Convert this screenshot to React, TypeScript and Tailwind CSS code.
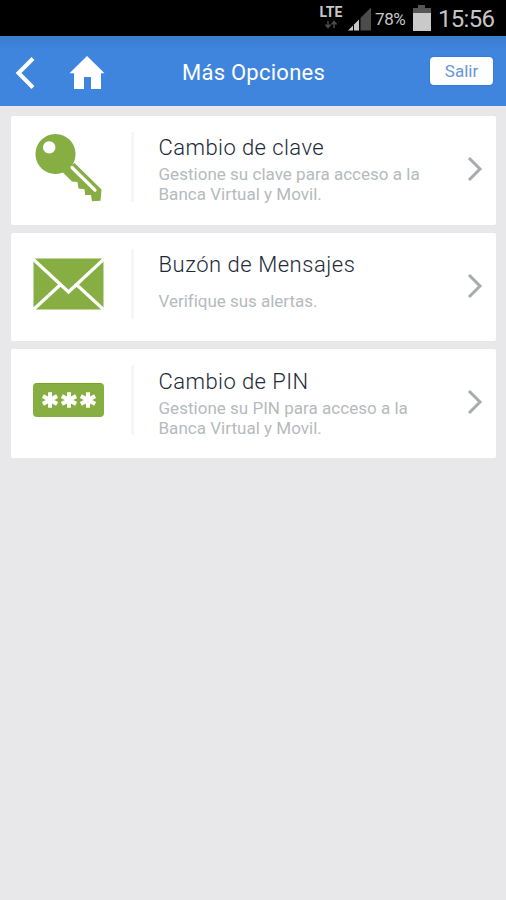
import React from "react";

function KeyIcon() {
  return (
    <svg width="71" height="72" viewBox="0 0 71 72" fill="#86ae43">
      <path
        fillRule="evenodd"
        d="M22.500 3a20 20 0 1 0 .01 0ZM16.200 10.200a6.200 6.200 0 1 1-.01 0Z"
      />
      <path d="M41.500 32 68.500 58.500 67.500 69.700 59 70.200 58 64H52.200L51.500 58.300 45.500 57.500 44.500 51 39 50.500 29.500 41Z" />
      <path d="m39 36.500 23 22.700" stroke="#fff" strokeWidth="3.300" strokeLinecap="round" />
    </svg>
  );
}

function EnvelopeIcon() {
  return (
    <svg width="71" height="52" viewBox="0 0 71 52" fill="none">
      <rect x=".5" y=".5" width="70" height="51" fill="#86ae43" />
      <path d="M0 1 35.500 34 71 1M.5 51.500 27 27M70.500 51.500 44 27" stroke="#fff" strokeWidth="3.300" />
    </svg>
  );
}

function Asterisk() {
  return (
    <svg width="16" height="16" viewBox="0 0 16 16" fill="none" stroke="#fff" strokeWidth="4">
      <path d="M8 .3v15.400M.9 4.100l14.200 7.800M15.100 4.100.9 11.900" />
    </svg>
  );
}

function PinIcon() {
  return (
    <div className="flex h-[34px] w-[71px] items-center justify-center gap-[3px] rounded-[4px] border-t border-[#79a51f] bg-[#86ae43] pb-[2px]">
      <Asterisk />
      <Asterisk />
      <Asterisk />
    </div>
  );
}

interface OptionProps {
  icon: React.ReactNode;
  title: string;
  titleClass: string;
  children: React.ReactNode;
}

function Option({ icon, title, titleClass, children }: OptionProps) {
  return (
    <a className="flex h-[108.500px] items-start rounded-[2px] bg-white">
      <div className="flex h-[102px] w-[115px] shrink-0 items-center justify-center">{icon}</div>
      <div className="ml-[5px] mt-4 h-[70px] w-[3px] bg-[#f6f6f7]" />
      <div className="ml-[24.500px] flex-1 whitespace-nowrap pt-[19px]">
        <h2 className={`text-[22px] font-light leading-[26px] text-[#1d2a37] ${titleClass}`}>{title}</h2>
        {children}
      </div>
      <svg className="mr-[13px] mt-10" width="16" height="26" viewBox="0 0 16 26" fill="none">
        <path d="m2 2 11 11L2 24" stroke="#a7abad" strokeWidth="3" />
      </svg>
    </a>
  );
}

export default function App() {
  return (
    <div className="flex h-[900px] w-[506px] flex-col overflow-hidden bg-[#e8e8eb] font-['Roboto',sans-serif]">
      <div className="flex h-9 shrink-0 bg-black text-[#c6c6c6]">
        <div className="ml-[319px] flex w-6 flex-col items-center pt-[5px]">
          <span className="text-[14px] font-bold leading-[15px] tracking-[0.100px]">LTE</span>
          <svg width="14" height="9" viewBox="0 0 14 9" fill="none" stroke="#4b4b4b" strokeWidth="1.500">
            <path d="M4 1v6M1.500 4.500 4 7.500l2.500-3M10 8V2M7.500 4.500 10 1.500l2.500 3" />
          </svg>
        </div>
        <svg className="ml-[5px] mt-[7px]" width="24" height="24" viewBox="0 0 24 24">
          <path d="M0 23.500 11 12.500v11Z" fill="#c8c8c8" />
          <path d="M5.500 18v6" stroke="#000" />
          <path d="M12.500 11 23 .5v23H12.500Z" fill="#4c4c4c" />
        </svg>
        <span className="ml-[3px] mt-[9px] w-8 text-[17px] leading-5 tracking-[-0.400px]">78%</span>
        <svg className="ml-[5px] mt-[4px]" width="20" height="27" viewBox="0 0 20 27">
          <path d="M6 1h7v3h6v5H1V4h5Z" fill="#555" />
          <path d="M1 9h18v18H1Z" fill="#c9c9c9" />
        </svg>
        <span className="ml-[6px] mt-[5px] text-[24px] leading-7 tracking-[-0.700px]">15:56</span>
      </div>

      <header className="flex h-[70px] shrink-0 items-center bg-linear-to-b from-[#3b7cce] to-[#3f85de] to-20% text-white">
        <svg className="ml-[14px] mt-[3px]" width="21" height="34" viewBox="0 0 21 34" fill="none">
          <path d="M19 2.500 4.500 17 19 31.500" stroke="#fff" strokeWidth="4" />
        </svg>
        <svg className="ml-[34px] mt-[3px]" width="36" height="36" viewBox="0 0 36 36" fill="#fff">
          <path d="M18 1 35.500 18.300H32V34H22V22h-7v12H5V18.300H.5Z" />
        </svg>
        <h1 className="ml-[77px] mt-[4px] w-[248px] text-[22px] leading-7 tracking-[0.250px]">Más Opciones</h1>
        <button className="flex h-[28px] w-[63px] items-center justify-center rounded-[4px] bg-white pt-[2px] text-[17px] text-[#6994d9] shadow-[0_0_2px_#2469c9]">
          Salir
        </button>
      </header>

      <main className="flex flex-col gap-[8px] pl-[11px] pr-[10px] pt-[10px]">
        <Option icon={<KeyIcon />} title="Cambio de clave" titleClass="tracking-[0.430px]">
          <p className="mt-[3px] text-[17px] leading-[20px] tracking-[0.020px] text-[#b5babd]">
            Gestione su clave para acceso a la
            <br />
            Banca Virtual y Movil.
          </p>
        </Option>
        <Option icon={<EnvelopeIcon />} title="Buzón de Mensajes" titleClass="tracking-[0.530px]">
          <p className="mt-[13px] text-[17px] leading-[20px] tracking-[-0.020px] text-[#b5babd]">
            Verifique sus alertas.
          </p>
        </Option>
        <Option icon={<PinIcon />} title="Cambio de PIN" titleClass="pt-px tracking-[0.430px]">
          <p className="mt-[3px] text-[17px] leading-[20px] tracking-[0.020px] text-[#b5babd]">
            Gestione su PIN para acceso a la
            <br />
            Banca Virtual y Movil.
          </p>
        </Option>
      </main>
    </div>
  );
}
